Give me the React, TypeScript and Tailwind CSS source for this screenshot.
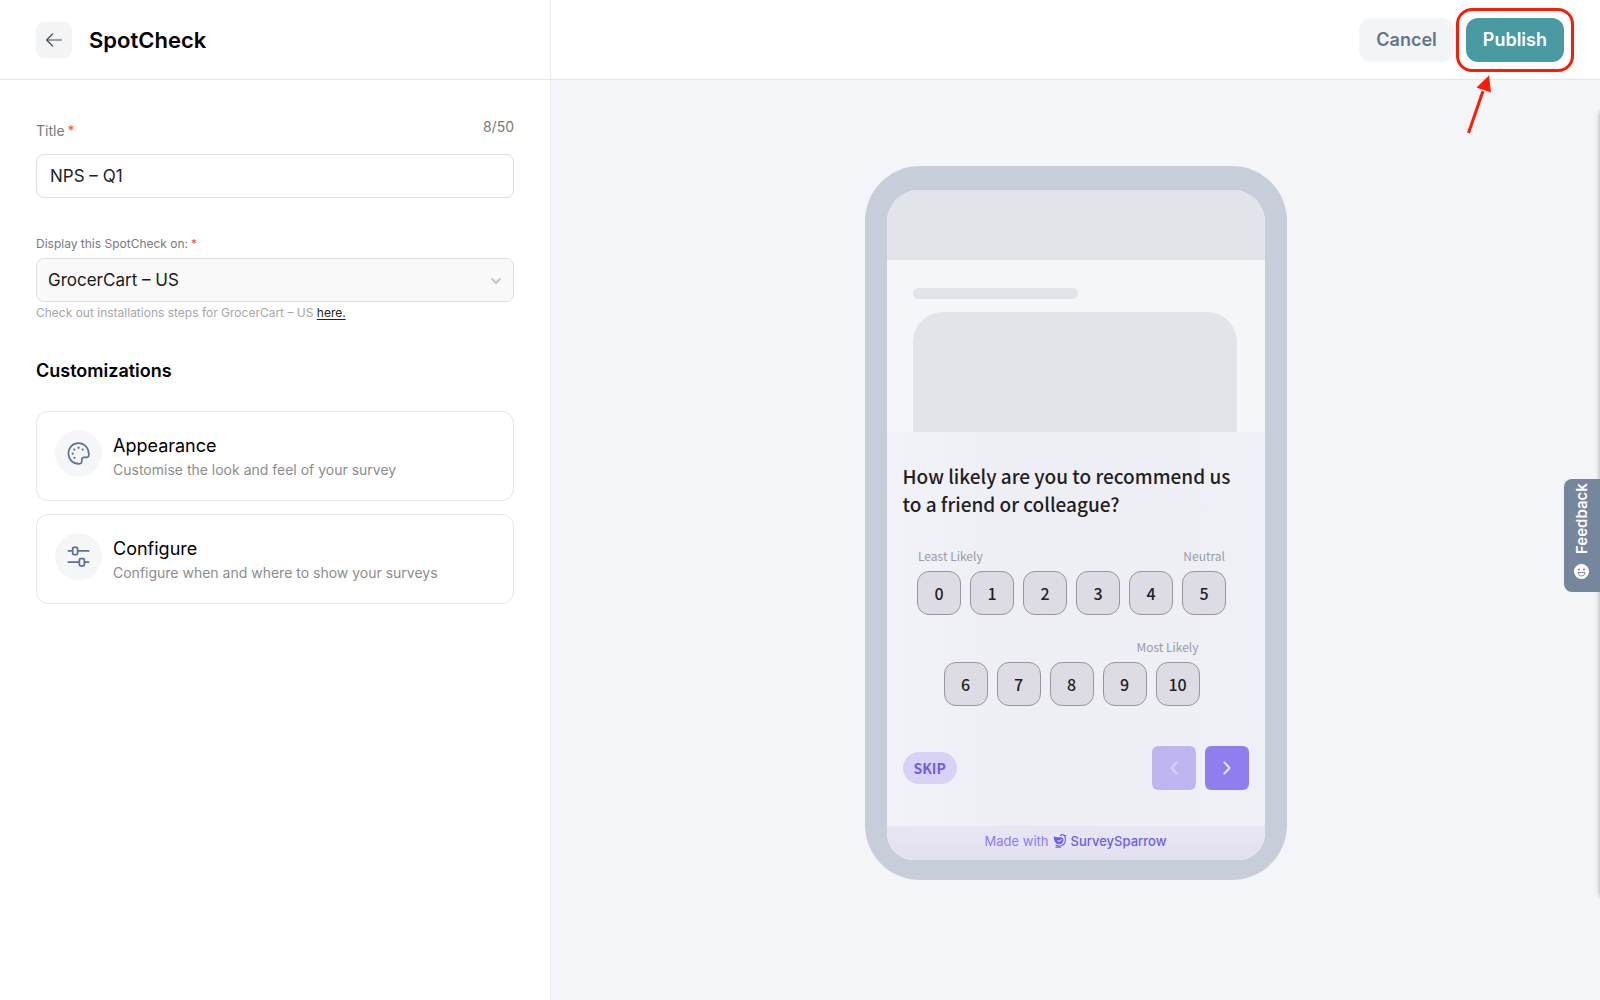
import { useState } from "react";
import type { ReactNode } from "react";

const LOW_SCORES = [0, 1, 2, 3, 4, 5];
const HIGH_SCORES = [6, 7, 8, 9, 10];
const MAX_TITLE = 50;

function ArrowLeftIcon() {
  return (
    <svg width="18" height="16" viewBox="0 0 18 16" fill="none" stroke="#4b4b4b" strokeWidth="1.2" strokeLinecap="round" strokeLinejoin="round">
      <path d="M16.4 8H1.6M7.6 2 1.6 8l6 6" />
    </svg>
  );
}

function PaletteIcon() {
  return (
    <svg width="23" height="23" viewBox="0 0 24 24" fill="none" stroke="#5f7190" strokeWidth="1.7" strokeLinejoin="round">
      <path d="M12 1.2C6 1.2 1.5 6 1.5 12S6 22.8 12.5 22.8c2 0 3-.9 3-2.6 0-1.4-.3-2 .1-3 .4-1 1.2-1.200 2.400-1.200h2.500c1.500 0 2.300-.9 2.300-2.800C22.800 6 18 1.200 12 1.200Z" />
      <g fill="#5f7190" stroke="none">
        <circle cx="12" cy="6" r="1.2" />
        <circle cx="16.3" cy="7.9" r="1.2" />
        <circle cx="7.7" cy="7.9" r="1.2" />
        <circle cx="5.9" cy="12.2" r="1.2" />
        <circle cx="7.8" cy="16.5" r="1.2" />
      </g>
    </svg>
  );
}

function SlidersIcon() {
  return (
    <svg width="23" height="23" viewBox="0 0 24 24" fill="none" stroke="#5f7190" strokeWidth="1.8" strokeLinecap="round">
      <path d="M1.5 6.2h4.2M11.2 6.2h11.3M1.5 17.9h11.3M18.3 17.9h4.2" />
      <rect x="5.9" y="2.4" width="5.2" height="7.6" rx="1.4" />
      <rect x="12.9" y="14.1" width="5.2" height="7.6" rx="1.4" />
    </svg>
  );
}

function SparrowLogo() {
  return (
    <svg width="14" height="14" viewBox="0 0 14 14" fill="none">
      <path d="M.8 2.200C2.600 3.400 4.800 3.400 6.600 3.200c2.800-.3 4.200 1.200 3.900 3.400-.3 2.200-2.100 3.700-4.400 3.700C3 10.300.8 7.700.8 2.200Z" fill="#6f5de8" />
      <path d="m4.600 6.300 1.500 1.300 2.500-2.300" stroke="#e6e2f4" strokeWidth="1.1" />
      <path d="M7.500 1.500C8.500.5 10 .5 11.200 1.400l1.500.3-1 .9c1.600 3.400.6 9.400-5.400 9.400-1.500 0-2.500-.3-3.400-.8M3 13.200h4.600" stroke="#6f5de8" strokeWidth="1.1" strokeLinecap="round" />
    </svg>
  );
}

function OptionCard({ icon, title, text }: { icon: ReactNode; title: string; text: string }) {
  return (
    <button type="button" className="flex h-[90px] w-full items-start gap-[11px] rounded-xl border border-[#e6e6e6] bg-white px-[18px] pt-[18px] text-left">
      <span className="grid h-[47px] w-[47px] shrink-0 place-items-center rounded-full bg-[#f4f6f8]">{icon}</span>
      <span className="flex flex-col pt-1">
        <span className="text-lg leading-6 text-black">{title}</span>
        <span className="text-sm leading-6 text-[#8c8c8c]">{text}</span>
      </span>
    </button>
  );
}

function ScoreRow({ scores, selected, onSelect }: { scores: number[]; selected: number | null; onSelect: (n: number) => void }) {
  return (
    <div className="flex gap-[9px]">
      {scores.map((n) => (
        <button
          key={n}
          type="button"
          aria-pressed={selected === n}
          onClick={() => onSelect(n)}
          className="h-11 w-11 rounded-xl border border-[#97969c] bg-[#dddce4] text-base font-medium text-[#222]"
        >
          {n}
        </button>
      ))}
    </div>
  );
}

function PhonePreview() {
  const [score, setScore] = useState<number | null>(null);

  return (
    <div className="w-[422px] shrink-0 rounded-[55px] bg-[#c8ced9] px-[22px] pt-6 pb-5">
      <div className="overflow-hidden rounded-t-[32px] rounded-b-[27px] bg-[#f4f6f8]">
        <div className="h-[70px] bg-[#e1e4e9]" />
        <div className="flex flex-col gap-[13px] pt-7 pr-7 pl-[26px]">
          <div className="h-[11px] w-[165px] rounded-full bg-[#e1e4e9]" />
          <div className="h-[120px] rounded-t-[30px] bg-[#e1e4e9]" />
        </div>

        <div className="bg-linear-to-r from-[#f2f2f9] via-[#eeeef5] via-30% to-[#efeff6] font-['Noto_Sans_CJK_JP','Noto_Sans',sans-serif]">
          <div className="px-4 pt-[30px]">
            <h2 className="text-[19px] leading-7 font-medium text-[#1f1f1f]">
              How likely are you to recommend us to a friend or colleague?
            </h2>
            <div className="flex flex-col items-center pt-7 pr-2">
              <div>
                <div className="flex justify-between px-px pb-[5px] text-xs leading-5 text-[#9b9ba1]">
                  <span>Least Likely</span>
                  <span>Neutral</span>
                </div>
                <ScoreRow scores={LOW_SCORES} selected={score} onSelect={setScore} />
              </div>
              <div className="pt-[22px]">
                <div className="px-px pb-[5px] text-right text-xs leading-5 text-[#9b9ba1]">Most Likely</div>
                <ScoreRow scores={HIGH_SCORES} selected={score} onSelect={setScore} />
              </div>
            </div>
            <div className="flex items-center justify-between pt-10 pb-9">
              <button type="button" className="h-8 rounded-full bg-[#d8d2f4] px-[11px] text-sm font-bold text-[#6f5de8]">
                SKIP
              </button>
              <div className="flex gap-[9px]">
                <button type="button" aria-label="Previous" className="grid h-11 w-11 place-items-center rounded-md bg-[#beb5f1]">
                  <svg width="8" height="14" viewBox="0 0 8 14" fill="none" stroke="#d8d2f6" strokeWidth="2" strokeLinecap="round" strokeLinejoin="round">
                    <path d="M6.5 1.5 1.5 7l5 5.5" />
                  </svg>
                </button>
                <button type="button" aria-label="Next" className="grid h-11 w-11 place-items-center rounded-md bg-[#907eee]">
                  <svg width="8" height="14" viewBox="0 0 8 14" fill="none" stroke="#e9e6fb" strokeWidth="2" strokeLinecap="round" strokeLinejoin="round">
                    <path d="m1.5 1.5 5 5.5-5 5.5" />
                  </svg>
                </button>
              </div>
            </div>
          </div>
          <div className="flex h-[34px] items-center justify-center gap-1 bg-linear-to-b from-[#e9e6f4] to-[#e2dff0] pb-1 font-['Inter',sans-serif] text-[13px] leading-5 text-[#6f5de8]">
            <span className="text-[#8b7df0]">Made with</span>
            <SparrowLogo />
            <span className="font-medium">SurveySparrow</span>
          </div>
        </div>
      </div>
    </div>
  );
}

export default function App() {
  const [title, setTitle] = useState("NPS – Q1");

  return (
    <div className="relative flex min-h-screen flex-col overflow-hidden bg-white font-['Inter',sans-serif]">
      <header className="flex h-20 border-b border-[#e2e3e6]">
        <div className="flex w-[551px] shrink-0 items-center gap-[17px] border-r border-[#ececef] px-9">
          <button type="button" aria-label="Back" className="grid h-9 w-9 place-items-center rounded-lg bg-[#f2f4f6]">
            <ArrowLeftIcon />
          </button>
          <h1 className="text-[22px] leading-7 font-semibold text-black">SpotCheck</h1>
        </div>
        <div className="flex flex-1 items-center justify-end gap-3 pr-9">
          <button type="button" className="h-11 rounded-xl bg-[#f2f4f6] px-[17px] text-lg font-semibold text-[#64748b]">
            Cancel
          </button>
          <div className="relative">
            <button type="button" className="h-11 rounded-xl bg-[#4a9aa3] px-[17px] text-lg font-semibold text-white">
              Publish
            </button>
            <span className="pointer-events-none absolute -inset-[10px] rounded-2xl border-[3px] border-[#ff1a00]" />
            <svg className="pointer-events-none absolute top-14 left-0" width="32" height="62" viewBox="0 0 32 62">
              <path d="M2.5 59 17 17" stroke="#ff1a00" strokeWidth="3" />
              <path d="M23 1.5 10.5 13.5 25 18.5Z" fill="#ff1a00" />
            </svg>
          </div>
        </div>
      </header>

      <div className="flex flex-1">
        <aside className="w-[551px] shrink-0 border-r border-[#ececef] px-9 pt-[35px]">
          <div className="flex items-start justify-between">
            <label htmlFor="title" className="flex gap-[3px] pt-1 text-sm leading-6 text-[#7a7a7a]">
              Title <span className="text-[#f4503a]">*</span>
            </label>
            <span className="text-sm leading-6 text-[#7a7a7a]">
              {title.length}/{MAX_TITLE}
            </span>
          </div>
          <input
            id="title"
            value={title}
            maxLength={MAX_TITLE}
            onChange={(e) => setTitle(e.target.value)}
            className="mt-[11px] block h-11 w-full rounded-lg border border-[#dfdfdf] bg-white px-[13px] text-[17px] text-[#222]"
          />

          <label htmlFor="channel" className="mt-9 flex gap-[3px] text-xs leading-5 text-[#7a7a7a]">
            Display this SpotCheck on: <span className="text-[#f4503a]">*</span>
          </label>
          <div className="relative mt-1">
            <select id="channel" className="block h-11 w-full appearance-none rounded-lg border border-[#dfdfdf] bg-[#f9f9f9] px-[11px] pt-0.5 text-[17px] text-[#1a1a1a]">
              <option>GrocerCart – US</option>
            </select>
            <svg className="pointer-events-none absolute top-[19px] right-3" width="12" height="8" viewBox="0 0 12 8" fill="none" stroke="#c4c4c4" strokeWidth="2">
              <path d="m1.5 1.5 4.5 4.5 4.5-4.5" />
            </svg>
          </div>
          <p className="mt-px text-xs leading-5 text-[#a6a6a6]">
            Check out installations steps for GrocerCart – US{" "}
            <a href="#install" className="text-[#222] underline underline-offset-2">
              here.
            </a>
          </p>

          <h2 className="mt-9 text-lg leading-6 font-semibold text-black">Customizations</h2>
          <div className="mt-7 flex flex-col gap-[13px]">
            <OptionCard icon={<PaletteIcon />} title="Appearance" text="Customise the look and feel of your survey" />
            <OptionCard icon={<SlidersIcon />} title="Configure" text="Configure when and where to show your surveys" />
          </div>
        </aside>

        <main className="flex flex-1 items-start justify-center bg-[#f4f5f9] pt-[86px]">
          <PhonePreview />
        </main>
      </div>

      {/* edge of the collapsed widget drawer */}
      <div className="absolute top-28 -right-2 bottom-[104px] w-2 shadow-[0_0_5px_rgba(0,0,0,0.35)]" />
      <button type="button" className="absolute top-[479px] right-0 flex h-[113px] w-9 rotate-180 items-center justify-start gap-[10px] rounded-r-lg bg-[#76869c] pt-[13px] text-[15px] font-semibold text-white [writing-mode:vertical-rl]">
        <svg className="rotate-180" width="15" height="15" viewBox="0 0 15 15">
          <circle cx="7.5" cy="7.5" r="7.5" fill="#fff" />
          <circle cx="5" cy="5.5" r="1" fill="#76869c" />
          <circle cx="10" cy="5.5" r="1" fill="#76869c" />
          <path d="M4 8.5h7c0 4.500-7 4.500-7 0Z" fill="#fff" stroke="#76869c" />
        </svg>
        <span>Feedback</span>
      </button>
    </div>
  );
}
